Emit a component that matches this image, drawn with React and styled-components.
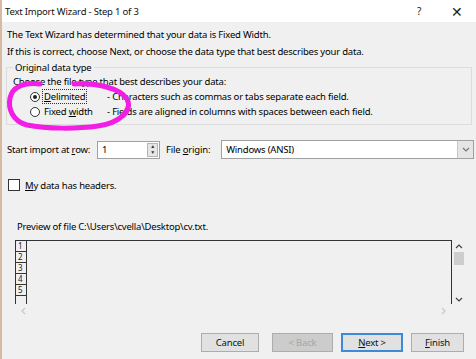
import React from "react";
import styled, { createGlobalStyle } from "styled-components";

const GlobalStyle = createGlobalStyle`
  html, body {
    margin: 0;
    padding: 0;
    background: #f0f0f0;
  }
  body {
    font-family: "Noto Sans", "Open Sans", sans-serif;
    font-size: 9.5px;
    letter-spacing: -0.2px;
    color: #000;
  }
`;

const Window = styled.div`
  position: relative;
  width: 476px;
  height: 359px;
  box-sizing: border-box;
  border-left: 2px solid #d8b9a3;
  background: #f0f0f0;
  overflow: hidden;
  display: flex;
  flex-direction: column;
`;

const TitleBar = styled.div`
  height: 22px;
  background: #fff;
  display: flex;
  align-items: center;
  padding-left: 3px;
  color: #111;
`;

const TitleText = styled.span`
  flex: 1;
`;

const TitleButton = styled.span`
  width: 38px;
  text-align: center;
  font-size: ${(p) => (p.$big ? "14px" : "10px")};
  color: #222;
`;

const Body = styled.div`
  flex: 1;
  display: flex;
  flex-direction: column;
  padding: 4px 0 0 4px;
`;

const Line = styled.div`
  height: 17px;
  line-height: 17px;
  padding-left: 1px;
  white-space: nowrap;
`;

const Group = styled.fieldset`
  margin: 1px 0 0 0;
  padding: 0 0 5px 6px;
  border: 1px solid #dcdcdc;
  width: 466px;
  box-sizing: border-box;
`;

const Legend = styled.legend`
  padding: 0 2px;
  margin-left: 0;
`;

const OptionRow = styled.div`
  display: flex;
  align-items: center;
  height: 15px;
  white-space: nowrap;
`;

const Radio = styled.span`
  width: 10px;
  height: 10px;
  border: 1px solid #333;
  border-radius: 50%;
  background: #fff;
  box-sizing: border-box;
  margin-left: 17px;
  margin-right: 2px;
  display: flex;
  align-items: center;
  justify-content: center;
  &::after {
    content: "";
    width: 4px;
    height: 4px;
    border-radius: 50%;
    background: ${(p) => (p.$checked ? "#222" : "transparent")};
  }
`;

const OptionLabel = styled.span`
  width: 65px;
  flex: none;
`;

const FocusText = styled.span`
  padding: 0 1px;
  border: 1px dotted ${(p) => (p.$focus ? "#333" : "transparent")};
`;

const U = styled.span`
  text-decoration: underline;
`;

const FieldRow = styled.div`
  display: flex;
  align-items: center;
  margin-top: 15px;
  height: 19px;
  padding-left: 1px;
`;

const FieldLabel = styled.span`
  white-space: nowrap;
`;

const Spinner = styled.div`
  width: 63px;
  height: 18px;
  margin-left: 7px;
  margin-right: 6px;
  border: 1px solid #a0a0a0;
  background: #fff;
  box-sizing: border-box;
  display: flex;
  align-items: center;
  padding-left: 4px;
`;

const SpinValue = styled.span`
  flex: 1;
`;

const SpinButtons = styled.div`
  width: 11px;
  height: 14px;
  margin-right: 1px;
  background: #e6e6e6;
  border: 1px solid #b5b5b5;
  box-sizing: border-box;
  display: flex;
  flex-direction: column;
  align-items: center;
  justify-content: space-around;
  font-size: 5px;
  line-height: 5px;
  color: #333;
`;

const Dropdown = styled.div`
  flex: 1;
  height: 19px;
  margin-left: 11px;
  margin-right: 2px;
  border: 1px solid #a0a0a0;
  background: #fff;
  box-sizing: border-box;
  display: flex;
  align-items: center;
  padding-left: 4px;
`;

const DropValue = styled.span`
  flex: 1;
`;

const DropArrow = styled.div`
  width: 15px;
  height: 17px;
  background: #e5e5e5;
  border-left: 1px solid #c8c8c8;
  display: flex;
  align-items: center;
  justify-content: center;
`;

const CheckRow = styled.div`
  display: flex;
  align-items: center;
  margin-top: 19px;
  height: 14px;
  padding-left: 2px;
`;

const CheckBox = styled.span`
  width: 12px;
  height: 12px;
  border: 1px solid #333;
  background: #fff;
  box-sizing: border-box;
  margin-right: 5px;
`;

const PreviewLabel = styled.div`
  margin-top: 27px;
  padding-left: 11px;
  height: 15px;
  line-height: 15px;
`;

const PreviewFrame = styled.div`
  margin: 6px 0 0 9px;
  width: 452px;
  display: grid;
  grid-template-columns: 437px 15px;
  grid-template-rows: 64px 14px;
`;

const PreviewGrid = styled.div`
  border-top: 1px solid #333;
  border-right: 1px solid #333;
  display: flex;
  flex-direction: column;
  overflow: hidden;
`;

const RowNum = styled.div`
  width: 12px;
  height: 11px;
  flex: none;
  box-sizing: border-box;
  border: 1px solid #333;
  border-top: none;
  font-size: 8px;
  line-height: 10px;
  padding-left: 2px;
  color: #222;
  overflow: hidden;
`;

const VScroll = styled.div`
  display: flex;
  flex-direction: column;
  align-items: center;
  padding: 3px 2px 0 0;
`;

const Thumb = styled.div`
  width: 10px;
  height: 13px;
  background: #cdcdcd;
  margin-top: 1px;
  flex: none;
`;

const Spacer = styled.div`
  flex: 1;
`;

const HScroll = styled.div`
  display: flex;
  align-items: center;
  justify-content: space-between;
  padding: 0 4px 0 5px;
`;

const Corner = styled.div``;

const ButtonBar = styled.div`
  display: flex;
  margin-top: 15px;
  padding-left: 195px;
`;

const Button = styled.div`
  width: ${(p) => p.$w}px;
  margin-left: ${(p) => p.$gap || 0}px;
  height: 19px;
  box-sizing: border-box;
  display: flex;
  align-items: center;
  justify-content: center;
  background: ${(p) => (p.$disabled ? "#cccccc" : "#e1e1e1")};
  border: ${(p) => (p.$default ? "2px solid #3c8ad8" : "1px solid #adadad")};
  color: ${(p) => (p.$disabled ? "#a6a6a6" : "#111")};
`;

const Annotation = styled.svg`
  position: absolute;
  left: 0;
  top: 0;
  pointer-events: none;
`;

const Chevron = ({ dir, color = "#555" }) => {
  const paths = {
    up: "M1 5 L4 2 L7 5",
    down: "M1 2 L4 5 L7 2",
    left: "M5 1 L2 4 L5 7",
    right: "M2 1 L5 4 L2 7",
  };
  return (
    <svg width="8" height="8" viewBox="0 0 8 8">
      <path d={paths[dir]} fill="none" stroke={color} strokeWidth="1.2" />
    </svg>
  );
};

export default function App() {
  return (
    <>
      <GlobalStyle />
      <Window>
        <TitleBar>
          <TitleText>Text Import Wizard - Step 1 of 3</TitleText>
          <TitleButton>?</TitleButton>
          <TitleButton $big>✕</TitleButton>
        </TitleBar>
        <Body>
          <Line>The Text Wizard has determined that your data is Fixed Width.</Line>
          <Line>
            If this is correct, choose Next, or choose the data type that best
            describes your data.
          </Line>
          <Group>
            <Legend>Original data type</Legend>
            <OptionRow>Choose the file type that best describes your data:</OptionRow>
            <OptionRow>
              <Radio $checked />
              <OptionLabel>
                <FocusText $focus>
                  <U>D</U>elimited
                </FocusText>
              </OptionLabel>
              - Characters such as commas or tabs separate each field.
            </OptionRow>
            <OptionRow>
              <Radio />
              <OptionLabel>
                <FocusText>
                  Fixed <U>w</U>idth
                </FocusText>
              </OptionLabel>
              - Fields are aligned in columns with spaces between each field.
            </OptionRow>
          </Group>
          <FieldRow>
            <FieldLabel>
              Start import at <U>r</U>ow:
            </FieldLabel>
            <Spinner>
              <SpinValue>1</SpinValue>
              <SpinButtons>
                <span>▲</span>
                <span>▼</span>
              </SpinButtons>
            </Spinner>
            <FieldLabel>
              File <U>o</U>rigin:
            </FieldLabel>
            <Dropdown>
              <DropValue>Windows (ANSI)</DropValue>
              <DropArrow>
                <Chevron dir="down" color="#777" />
              </DropArrow>
            </Dropdown>
          </FieldRow>
          <CheckRow>
            <CheckBox />
            <span>
              <U>M</U>y data has headers.
            </span>
          </CheckRow>
          <PreviewLabel>Preview of file C:\Users\cvella\Desktop\cv.txt.</PreviewLabel>
          <PreviewFrame>
            <PreviewGrid>
              {[1, 2, 3, 4, 5, 6].map((n) => (
                <RowNum key={n}>{n <= 5 ? n : ""}</RowNum>
              ))}
            </PreviewGrid>
            <VScroll>
              <Chevron dir="up" color="#444" />
              <Thumb />
              <Spacer />
              <Chevron dir="down" color="#444" />
            </VScroll>
            <HScroll>
              <Chevron dir="left" color="#c8c8c8" />
              <Chevron dir="right" color="#c8c8c8" />
            </HScroll>
            <Corner />
          </PreviewFrame>
          <ButtonBar>
            <Button $w={58}>Cancel</Button>
            <Button $w={61} $gap={13} $disabled>
              &lt; Back
            </Button>
            <Button $w={62} $gap={8} $default>
              <span>
                <U>N</U>ext &gt;
              </span>
            </Button>
            <Button $w={53} $gap={8}>
              <span>
                <U>F</U>inish
              </span>
            </Button>
          </ButtonBar>
        </Body>
        <Annotation width="476" height="359" viewBox="0 0 476 359">
          <path
            d="M72 84 C 95 83, 118 88, 125 99 C 131 111, 117 123, 96 126 C 75 129, 45 129, 25 125 C 10 121, 6 108, 8 98 C 10 88, 20 82, 38 84"
            fill="none"
            stroke="#f21ee6"
            strokeWidth="5"
            strokeLinecap="round"
          />
        </Annotation>
      </Window>
    </>
  );
}
